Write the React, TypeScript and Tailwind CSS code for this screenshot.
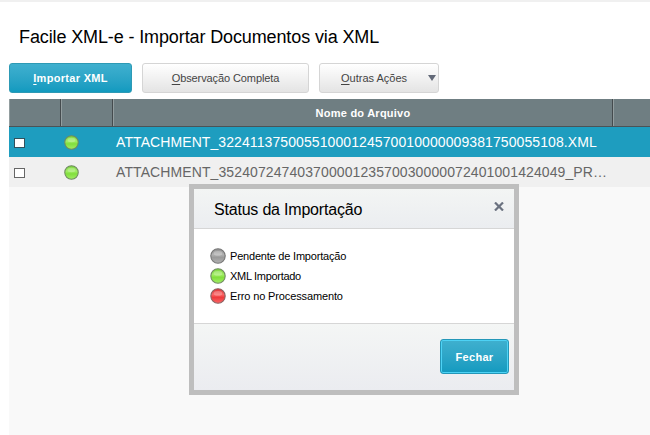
import React from "react";

function Orb({ color, size }: { color: "green" | "gray" | "red"; size: number }) {
  const tones = {
    green: { light: "#a2ee66", base: "#82df3c", dark: "#78d238", rim: "#6f8a60" },
    gray: { light: "#b2b2b2", base: "#9a9a9a", dark: "#8e8e8e", rim: "#767676" },
    red: { light: "#fb6666", base: "#ee3a3d", dark: "#dc3034", rim: "#8a6060" },
  }[color];
  return (
    <svg width={size} height={size} viewBox="0 0 16 16" className="block shrink-0">
      <defs>
        <linearGradient id={"orb-" + color} x1="0" y1="0" x2="0" y2="1">
          <stop offset="0" stopColor={tones.dark} />
          <stop offset="0.4" stopColor={tones.light} />
          <stop offset="0.6" stopColor={tones.base} />
          <stop offset="1" stopColor={tones.light} />
        </linearGradient>
      </defs>
      <circle cx="8" cy="8" r="7.2" fill={"url(#orb-" + color + ")"} stroke={tones.rim} strokeWidth="1.1" />
      <ellipse cx="8" cy="5.4" rx="4.2" ry="2.4" fill="#fff" opacity="0.24" />
    </svg>
  );
}

function Row({ name, selected, spacing }: { name: string; selected?: boolean; spacing: string }) {
  return (
    <div className={"flex h-[30px] items-center " + (selected ? "bg-[#1e9dbf] text-white" : "bg-[#f0f0f0] text-[#666]")}>
      <div className="flex w-[52px] shrink-0 pl-[5px] pt-[2px]">
        <span className={"h-[10px] w-[11px] border bg-white " + (selected ? "border-[#31515c]" : "border-[#666]")} />
      </div>
      <div className="flex w-[52px] shrink-0 pl-[3px]">
        <Orb color="green" size={15} />
      </div>
      <div className={"pl-[3px] text-[14px] leading-[30px] whitespace-nowrap " + spacing}>{name}</div>
    </div>
  );
}

export default function App() {
  return (
    <div className="relative h-[435px] w-[650px] overflow-hidden border-t-2 border-[#f0f0f0] bg-white font-['Liberation_Sans',Arial,sans-serif]">
      <h1 className="h-[61px] pt-[23px] pl-[19px] text-[18px] leading-[24px] whitespace-nowrap text-black">
        <span className="tracking-[-0.12px]">Facile XML-e - Importar Documentos via XML</span>
      </h1>
      <div className="flex h-[30px] gap-[10px] pl-[9px] text-[11px] text-[#444]">
        <button className="h-[30px] w-[123px] rounded-[3px] border border-[#2d9ab5] bg-linear-to-b from-[#3fb0cf] to-[#119abf] pt-[1px] font-bold text-white">
          <span className="tracking-[0.3px]"><u className="underline-offset-2">I</u>mportar XML</span>
        </button>
        <button className="h-[30px] w-[167px] rounded-[3px] border border-[#d5d5d5] bg-linear-to-b from-white to-[#e4e4e4] pt-[1px]">
          <span className="tracking-[-0.1px]"><u className="underline-offset-2">O</u>bservação Completa</span>
        </button>
        <button className="flex h-[30px] w-[120px] items-center rounded-[3px] border border-[#d5d5d5] bg-linear-to-b from-white to-[#e4e4e4] pt-[1px] pl-[21px]">
          <span><u className="underline-offset-2">O</u>utras Ações</span>
          <svg width="8" height="6" className="mr-[2px] mb-[1px] ml-auto"><path d="M0 0h8L4 6z" fill="#626978" /></svg>
        </button>
      </div>
      <div className="ml-[9px] mt-[6px] h-[336px] bg-[#f9f9f9]">
        <div className="flex h-[28px] border-b border-[#4b5357] bg-[#6f7e82] text-[11px] font-bold text-white">
          <div className="w-[52px] border-r border-l border-l-[#929d9f] border-r-[#444b4e]" />
          <div className="w-[52px] border-r border-l border-l-[#929d9f] border-r-[#444b4e]" />
          <div className="w-[500px] border-r border-l border-l-[#929d9f] border-r-[#444b4e] text-center leading-[28px]">
            <span className="tracking-[0.24px]">Nome do Arquivo</span>
          </div>
          <div className="grow border-l border-l-[#929d9f]" />
        </div>
        <Row selected spacing="tracking-[0.09px]" name="ATTACHMENT_32241137500551000124570010000009381750055108.XML" />
        <Row spacing="tracking-[0.1px]" name="ATTACHMENT_35240724740370000123570030000072401001424049_PR…" />
      </div>

      <section className="absolute top-[182px] left-[189px] flex h-[211px] w-[330px] flex-col border-[5px] border-[#bebebe] bg-white text-black">
        <header className="flex h-[40px] shrink-0 items-start justify-between border-b border-[#d6d6d6] bg-linear-to-b from-[#f3f5f4] to-[#ebedf0] pr-[10px] pl-[20px]">
          <span className="pt-[9px] text-[16px] leading-[24px] tracking-[-0.2px] whitespace-nowrap">Status da Importação</span>
          <svg width="10" height="9" viewBox="0 0 10 9" className="mt-[13px]"><path d="M1 .5l8 8M9 .5l-8 8" stroke="#6b7280" strokeWidth="2.2" /></svg>
        </header>
        <div className="h-[94px] shrink-0 pt-[17px] pl-[16px] text-[11px]">
          <div className="flex h-[20px] items-center gap-[4px]"><Orb color="gray" size={16} /><span className="tracking-[-0.2px]">Pendente de Importação</span></div>
          <div className="flex h-[20px] items-center gap-[4px]"><Orb color="green" size={16} /><span className="tracking-[-0.3px]">XML Importado</span></div>
          <div className="flex h-[20px] items-center gap-[4px]"><Orb color="red" size={16} /><span className="tracking-[-0.13px]">Erro no Processamento</span></div>
        </div>
        <footer className="flex grow items-start justify-end border-t border-[#d6d6d6] bg-linear-to-b from-[#f4f6f5] to-[#ebecf0] pt-[15px] pr-[5px]">
          <button className="h-[35px] w-[69px] rounded-[3px] border border-[#2497b8] bg-linear-to-b from-[#3fb0cf] to-[#119abf] pt-[1px] text-[11px] font-bold tracking-[0.3px] text-white shadow-[inset_0_0_0_1px_#4dd2f5]">Fechar</button>
        </footer>
      </section>
    </div>
  );
}
